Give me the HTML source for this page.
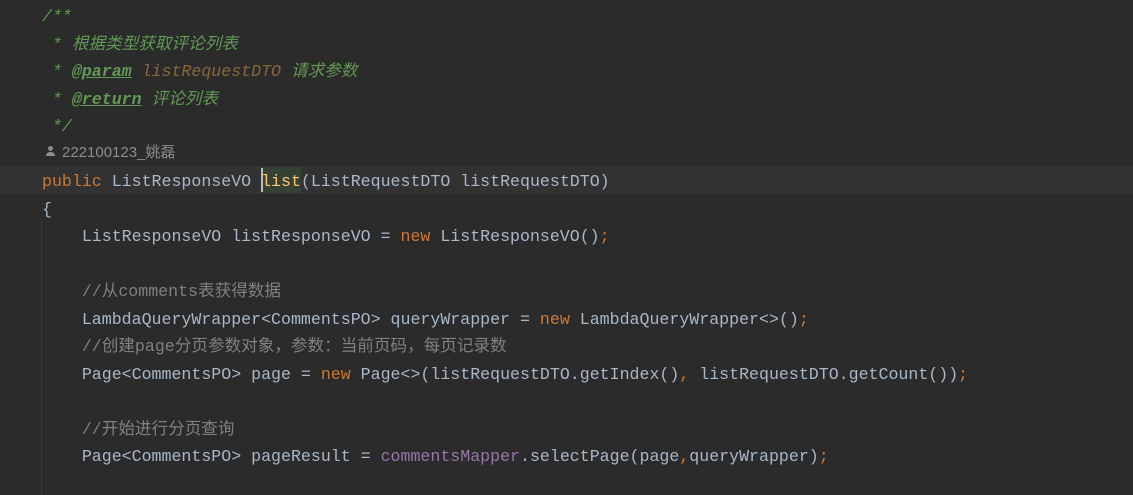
<!DOCTYPE html>
<html><head><meta charset="utf-8"><style>
html,body{margin:0;padding:0;background:#2b2b2b;width:1133px;height:495px;overflow:hidden}
.l{position:absolute;left:42px;height:27.5px;line-height:27.5px;white-space:pre;font-family:"Liberation Mono","Noto Sans CJK SC",monospace;font-size:16.6px;color:#a9b7c6;margin-top:2px}
.k{color:#cc7832}.d{color:#629755;font-style:italic}.t{color:#629755;font-weight:bold;font-style:italic;text-decoration:underline}
.p{color:#8a653b;font-style:italic}.c{color:#808080}.m{color:#9876aa}
.cur{position:absolute;left:0;top:166px;width:1133px;height:27.5px;background:#323232}
.guide{position:absolute;left:41px;top:221px;width:1px;height:274px;background:#3b3b3b}
</style></head><body>
<div class="cur"></div>
<div class="guide"></div>
<div style="position:absolute;left:261px;top:167px;width:40px;height:26px;background:#344134"></div>
<div style="position:absolute;left:261px;top:168px;width:2px;height:24px;background:#bbbbbb"></div>
<div class="l d" style="top:1px">/**</div>
<div class="l d" style="top:28.5px"> * 根据类型获取评论列表</div>
<div class="l d" style="top:56px"> * <span class="t">@param</span> <span class="p">listRequestDTO</span> 请求参数</div>
<div class="l d" style="top:83.5px"> * <span class="t">@return</span> 评论列表</div>
<div class="l d" style="top:111px"> */</div>
<div style="position:absolute;left:45px;top:144px;width:12px;height:14px">
<div style="position:absolute;left:3px;top:2px;width:5px;height:5px;border-radius:50%;background:#8c8c8c"></div>
<div style="position:absolute;left:1px;top:8px;width:9px;height:4px;border-radius:4px 4px 0 0;background:#8c8c8c"></div></div>
<div style="position:absolute;left:62px;top:143px;font-family:'Liberation Sans','Noto Sans CJK SC',sans-serif;font-size:15px;color:#8c8c8c;line-height:20px">222100123_姚磊</div>
<div class="l" style="top:166px"><span class="k">public</span> ListResponseVO <span style="color:#ffc66d">list</span>(ListRequestDTO listRequestDTO)</div>
<div class="l" style="top:193.5px">{</div>
<div class="l" style="top:221px">    ListResponseVO listResponseVO = <span class="k">new</span> ListResponseVO()<span class="k">;</span></div>
<div class="l c" style="top:276px">    //从comments表获得数据</div>
<div class="l" style="top:303.5px">    LambdaQueryWrapper&lt;CommentsPO&gt; queryWrapper = <span class="k">new</span> LambdaQueryWrapper&lt;&gt;()<span class="k">;</span></div>
<div class="l c" style="top:331px">    //创建page分页参数对象，参数：当前页码，每页记录数</div>
<div class="l" style="top:358.5px">    Page&lt;CommentsPO&gt; page = <span class="k">new</span> Page&lt;&gt;(listRequestDTO.getIndex()<span class="k">,</span> listRequestDTO.getCount())<span class="k">;</span></div>
<div class="l c" style="top:413.5px">    //开始进行分页查询</div>
<div class="l" style="top:441px">    Page&lt;CommentsPO&gt; pageResult = <span class="m">commentsMapper</span>.selectPage(page<span class="k">,</span>queryWrapper)<span class="k">;</span></div>
</body></html>
